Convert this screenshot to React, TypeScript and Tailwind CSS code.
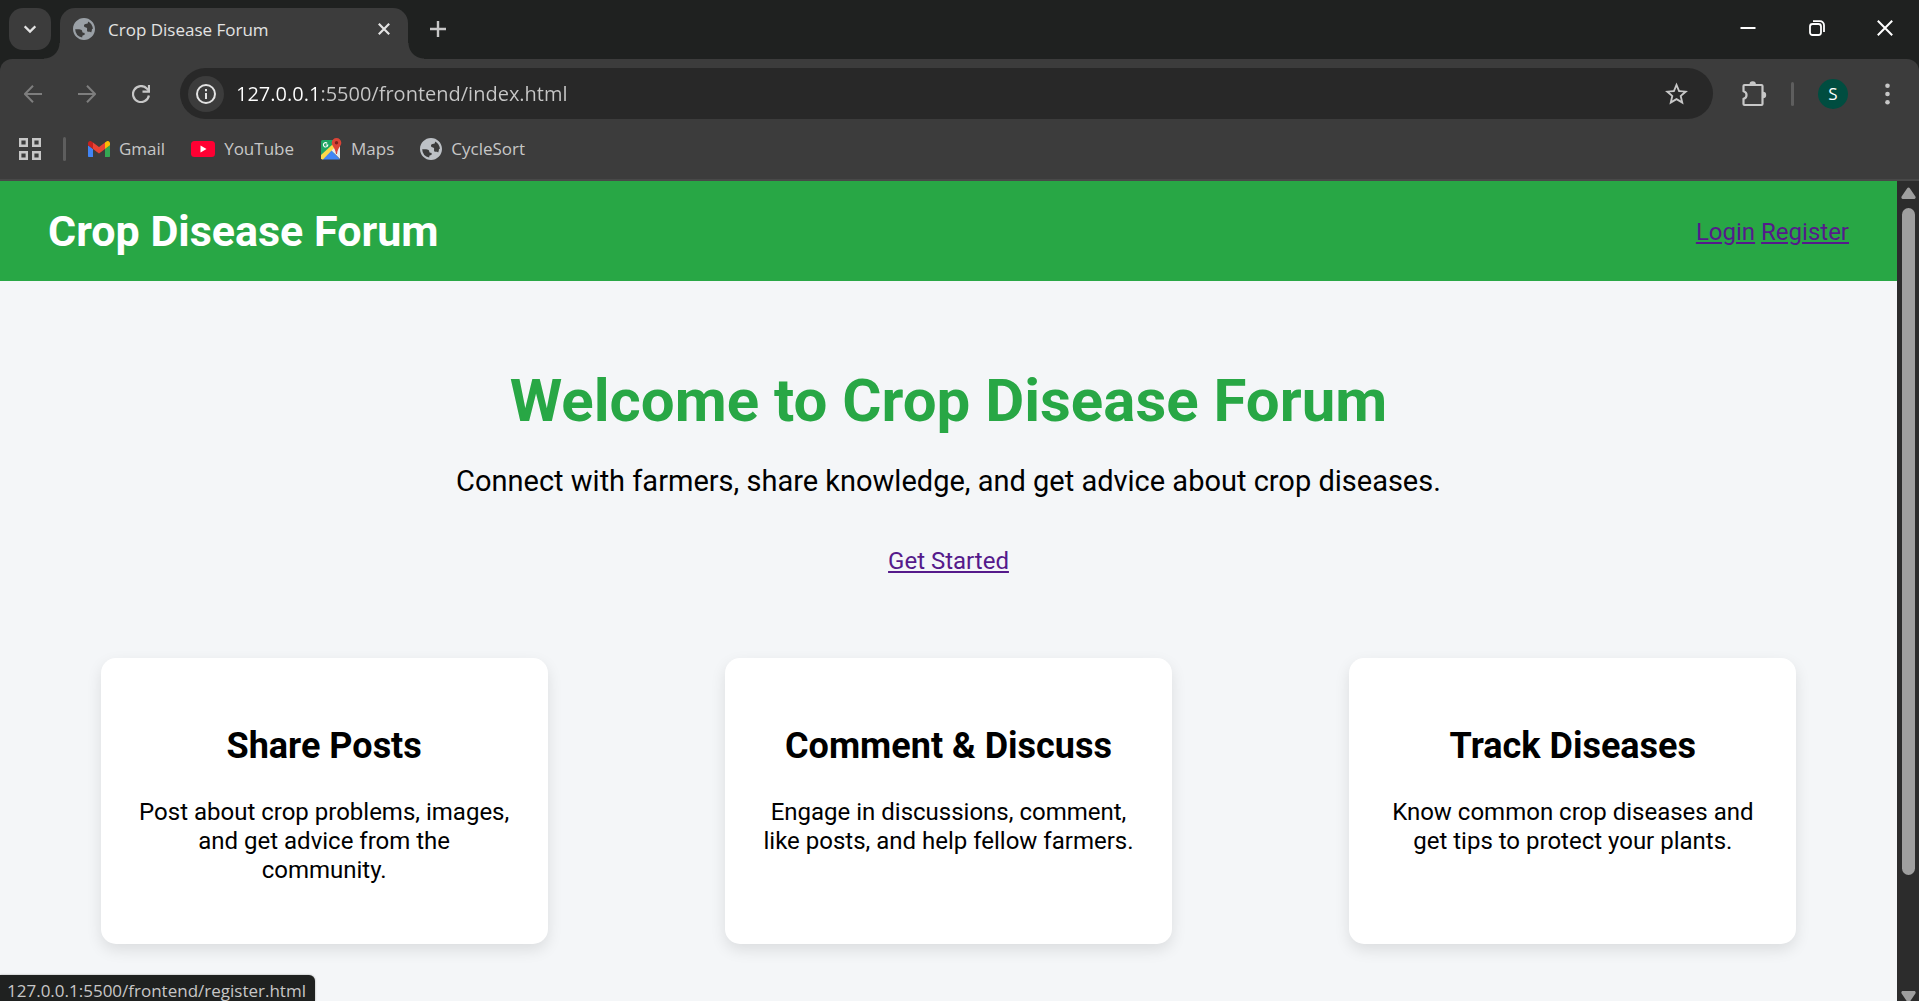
import { useState } from "react";
import type { ReactNode } from "react";

const cards = [
  { title: "Share Posts", text: "Post about crop problems, images, and get advice from the community." },
  { title: "Comment & Discuss", text: "Engage in discussions, comment, like posts, and help fellow farmers." },
  { title: "Track Diseases", text: "Know common crop diseases and get tips to protect your plants." },
];

function GlobeIcon({ className }: { className: string }) {
  return (
    <svg viewBox="0 0 16 16" className={`size-[22px] shrink-0 ${className}`} fill="currentColor" aria-hidden="true">
      <path d="M8 0C3.6 0 0 3.6 0 8s3.6 8 8 8 8-3.6 8-8-3.6-8-8-8zm5.8 8c0 .9-.2 1.8-.6 2.5-.6-.5-1.2-.5-1.7-.5-.9 0-1.3-.3-1.3-1 0-.9.3-1.5-.3-1.9-.5-.4-1.500-.3-1.800-1-.3-.8.2-1.6 1-1.7.9-.1 1.5-.1 1.7-.7.2-.5.1-.9.1-1.1A6.400 6.400 0 0 1 14.400 8zM1.600 8.200c.8 0 2.800 0 3.600.1.900.1 1.500.6 1.500 1.400 0 .7.3 1.100 1 1.100.7 0 .9.4.8 1-.1.5-.6.7-1.100.8-.6.2-.7.8-.7 1.600A6.400 6.400 0 0 1 1.600 8.200z" />
    </svg>
  );
}

function GmailIcon() {
  return (
    <svg viewBox="0 0 88 66" className="w-[22px] shrink-0" aria-hidden="true">
      <path fill="#4285f4" d="M6 66h14V32L0 17v43c0 3.300 2.700 6 6 6" />
      <path fill="#34a853" d="M68 66h14c3.300 0 6-2.700 6-6V17L68 32" />
      <path fill="#fbbc04" d="M68 6v26l20-15V9c0-7.400-8.500-11.700-14.400-7.200" />
      <path fill="#ea4335" d="M20 32V6l24 18L68 6v26L44 50" />
      <path fill="#c5221f" d="M0 9v8l20 15V6l-5.600-4.200C8.500-2.700 0 1.600 0 9" />
    </svg>
  );
}

function YouTubeIcon() {
  return (
    <svg viewBox="0 0 24 16" className="w-6 shrink-0" aria-hidden="true">
      <rect width="24" height="16" rx="3.5" fill="#ff0033" />
      <path d="M9.500 4.500v7l6-3.500z" fill="#fff" />
    </svg>
  );
}

function MapsIcon() {
  return (
    <svg viewBox="0 0 22 22" className="size-[22px] shrink-0" aria-hidden="true">
      <path d="M2.500 2H18v10L10 20H2.500A1.500 1.500 0 0 1 1 20V3.500A1.500 1.500 0 0 1 2.500 2z" fill="#1fa463" />
      <path d="M10.500 11.500 20 21.500H2z" fill="#4285f4" />
      <path d="M11 12 19 5l1 3v13z" fill="#e8eaed" />
      <path d="M1 17 13 6l2.500 2.500L3 21.500 1 21z" fill="#fdd94b" />
      <path d="M16.500 0a4.800 4.800 0 0 0-4.800 4.800c0 3.200 3.600 5 4.300 11.200h1c.7-6.200 4.300-8 4.300-11.200A4.800 4.800 0 0 0 16.500 0" fill="#db4437" />
      <circle cx="16.500" cy="4.800" r="1.700" fill="#7b231e" />
      <path d="M7.200 5.300A2.200 2.200 0 1 0 7.800 7H5.800" fill="none" stroke="#fff" strokeWidth="1.100" />
    </svg>
  );
}

function IconButton({ label, className, children }: { label: string; className: string; children: ReactNode }) {
  return (
    <button type="button" aria-label={label} className={`flex shrink-0 items-center justify-center ${className}`}>
      {children}
    </button>
  );
}

function TabStrip() {
  return (
    <div className="flex h-[59px] shrink-0 items-end bg-[#1f2120]">
      <IconButton label="Search tabs" className="mb-[9px] ml-[9px] size-[42px] rounded-[14px] bg-[#3c3c3c] text-[#e3e3e3]">
        <svg viewBox="0 0 12 12" className="size-3" fill="none" stroke="currentColor" strokeWidth="2.200" aria-hidden="true">
          <path d="M.7 3.300 6 8.600l5.300-5.300" />
        </svg>
      </IconButton>
      <div className="relative ml-[9px] flex h-[51px] w-[348px] items-center rounded-t-[15px] bg-[#3c3c3c] pb-[9px] pl-[13px] pr-3 before:absolute before:-left-4 before:bottom-0 before:size-4 before:bg-[radial-gradient(circle_at_0_0,transparent_15px,#3c3c3c_16px)] after:absolute after:-right-4 after:bottom-0 after:size-4 after:bg-[radial-gradient(circle_at_100%_0,transparent_15px,#3c3c3c_16px)]">
        <GlobeIcon className="text-[#9aa0a6]" />
        <span className="ml-[13px] mt-0.5 flex-1 whitespace-nowrap text-[17px] leading-6 text-[#e3e3e3]">Crop Disease Forum</span>
        <IconButton label="Close tab" className="size-6 text-[#e3e3e3]">
          <svg viewBox="0 0 12 12" className="size-3" fill="none" stroke="currentColor" strokeWidth="2.200" aria-hidden="true">
            <path d="m.8.8 10.400 10.400M11.200.8.800 11.200" />
          </svg>
        </IconButton>
      </div>
      <IconButton label="New tab" className="mb-[9px] ml-[9px] size-[42px] text-[#c7c7c7]">
        <svg viewBox="0 0 16 16" className="size-4" fill="none" stroke="currentColor" strokeWidth="2.400" aria-hidden="true">
          <path d="M8 0v16M0 8h16" />
        </svg>
      </IconButton>
      <div className="ml-auto flex h-full text-white">
        <IconButton label="Minimize" className="h-14 w-[69px]">
          <svg viewBox="0 0 16 16" className="size-4" stroke="currentColor" strokeWidth="2" aria-hidden="true">
            <path d="M.5 8h15" />
          </svg>
        </IconButton>
        <IconButton label="Restore" className="h-14 w-[69px]">
          <svg viewBox="0 0 16 16" className="size-4" fill="none" stroke="currentColor" strokeWidth="1.800" aria-hidden="true">
            <rect x="1" y="4" width="11" height="11" rx="2.500" />
            <path d="M4 1.200h7a4 4 0 0 1 4 4V12" />
          </svg>
        </IconButton>
        <IconButton label="Close" className="h-14 w-[68px]">
          <svg viewBox="0 0 16 16" className="size-4" fill="none" stroke="currentColor" strokeWidth="2" aria-hidden="true">
            <path d="m.8.8 14.400 14.400M15.200.8.800 15.200" />
          </svg>
        </IconButton>
      </div>
    </div>
  );
}

function Toolbar() {
  const [url, setUrl] = useState("127.0.0.1:5500/frontend/index.html");
  return (
    <div className="flex items-center py-[9px]">
      <IconButton label="Back" className="ml-[6px] h-12 w-[54px] text-[#7e7e7e]">
        <svg viewBox="0 0 18 18" className="size-[18px]" fill="none" stroke="currentColor" strokeWidth="2" aria-hidden="true">
          <path d="M18 9H1.500M9 .8.9 9 9 17.200" />
        </svg>
      </IconButton>
      <IconButton label="Forward" className="h-12 w-[54px] text-[#7e7e7e]">
        <svg viewBox="0 0 18 18" className="size-[18px]" fill="none" stroke="currentColor" strokeWidth="2" aria-hidden="true">
          <path d="M0 9h16.500M9 .8 17.100 9 9 17.200" />
        </svg>
      </IconButton>
      <IconButton label="Reload" className="h-12 w-[54px] text-[#c7c7c7]">
        <svg viewBox="0 0 18 18" className="size-[18px]" fill="none" stroke="currentColor" strokeWidth="2.200" aria-hidden="true">
          <path d="M16.900 10.500A8 8 0 1 1 14.800 3.500L16.500 5.300" />
          <path d="M17 0v6.700h-6.500" />
        </svg>
      </IconButton>
      <div className="ml-3 flex h-[51px] flex-1 items-center rounded-full bg-[#282828] pl-2 pr-4">
        <IconButton label="View site information" className="size-9 rounded-full bg-[#3c3c3c] text-[#e3e3e3]">
          <svg viewBox="0 0 20 20" className="size-5" fill="none" stroke="currentColor" strokeWidth="2" aria-hidden="true">
            <circle cx="10" cy="10" r="9" />
            <path d="M10 9v6M10 5v2.200" />
          </svg>
        </IconButton>
        <input
          aria-label="Address"
          value={url}
          onChange={(e) => setUrl(e.target.value)}
          className="ml-3 min-w-0 flex-1 bg-[linear-gradient(90deg,#ffffff_83px,#c7c7c7_84px)] bg-clip-text text-[20px] text-transparent outline-none"
        />
        <IconButton label="Bookmark this tab" className="size-[42px] text-[#c7c7c7]">
          <svg viewBox="2 2 20 19" className="size-[23px]" fill="currentColor" aria-hidden="true">
            <path d="m22 9.240-7.190-.62L12 2 9.190 8.630 2 9.240l5.460 4.730L5.820 21 12 17.270 18.180 21l-1.630-7.030zM12 15.400l-3.760 2.270 1-4.280-3.320-2.880 4.380-.38L12 6.100l1.710 4.040 4.380.38-3.320 2.880 1 4.280z" />
          </svg>
        </IconButton>
      </div>
      <IconButton label="Extensions" className="ml-5 size-[42px] text-[#c7c7c7]">
        <svg viewBox="0 0 26 26" className="size-[26px]" fill="none" stroke="currentColor" strokeWidth="2.200" strokeLinejoin="round" aria-hidden="true">
          <path d="M3.500 4h17a1 1 0 0 1 1 1v18a1 1 0 0 1-1 1h-17a1 1 0 0 1-1-1v-5.200a3.900 3.900 0 0 0 0-7.600V5a1 1 0 0 1 1-1z" />
          <path d="M8.500 3.500a3.200 3.200 0 0 1 6.400 0zM22 10.800a3.200 3.200 0 0 1 0 6.400z" fill="currentColor" stroke="none" />
        </svg>
      </IconButton>
      <div className="ml-4 h-6 w-[3px] rounded-full bg-[#5e5e5e]" />
      <IconButton label="Profile" className="ml-6 size-[30px] rounded-full bg-[#004d40] text-[17px] text-white">
        S
      </IconButton>
      <IconButton label="Menu" className="ml-[18px] mr-[11px] size-[42px] text-[#c7c7c7]">
        <svg viewBox="0 0 5 22" className="h-[22px]" fill="currentColor" aria-hidden="true">
          <circle cx="2.500" cy="2.700" r="2.300" />
          <circle cx="2.500" cy="11" r="2.300" />
          <circle cx="2.500" cy="19.300" r="2.300" />
        </svg>
      </IconButton>
    </div>
  );
}

function Bookmark({ icon, label }: { icon: ReactNode; label: string }) {
  return (
    <a href="#" className="flex items-center gap-[9px] text-[17px] leading-6 text-[#c7c7c7]">
      {icon}
      {label}
    </a>
  );
}

function BookmarksBar() {
  return (
    <nav aria-label="Bookmarks" className="flex h-[51px] items-center pb-[9px]">
      <IconButton label="Apps" className="ml-[19px] size-[22px] text-[#c7c7c7]">
        <svg viewBox="0 0 22 22" className="size-[22px]" fill="none" stroke="currentColor" strokeWidth="2.400" aria-hidden="true">
          <path d="M1.200 1.200h6.600v6.600H1.200zM14.200 1.200h6.600v6.600h-6.600zM1.200 14.200h6.600v6.600H1.200zM14.200 14.200h6.600v6.600h-6.600z" />
        </svg>
      </IconButton>
      <div className="mx-[22px] h-6 w-[3px] rounded-full bg-[#5e5e5e]" />
      <div className="flex gap-[26px]">
        <Bookmark icon={<GmailIcon />} label="Gmail" />
        <Bookmark icon={<YouTubeIcon />} label="YouTube" />
        <Bookmark icon={<MapsIcon />} label="Maps" />
        <Bookmark icon={<GlobeIcon className="text-[#bdc1c6]" />} label="CycleSort" />
      </div>
    </nav>
  );
}

function ForumPage() {
  return (
    <div className="min-w-0 flex-1 overflow-hidden bg-[#f4f6f8] font-['Roboto',sans-serif] text-2xl leading-[29px] text-black">
      <header className="flex items-center justify-between bg-[#28a745] px-12 py-6">
        <h1 className="text-[43px] font-bold leading-[52px] text-white">Crop Disease Forum</h1>
        <nav className="flex gap-1.5 pt-0.5 text-[#551a8b]">
          <a href="#login" className="underline">Login</a>
          <a href="#register" className="underline">Register</a>
        </nav>
      </header>
      <main>
        <section className="pb-[83px] pt-[85px] text-center">
          <h2 className="text-[60px] font-bold leading-[70px] text-[#28a745]">Welcome to Crop Disease Forum</h2>
          <p className="mt-7 text-[29px] leading-[34px]">Connect with farmers, share knowledge, and get advice about crop diseases.</p>
          <p className="mt-[49px] leading-7">
            <a href="#register" className="text-[#551a8b] underline">Get Started</a>
          </p>
        </section>
        <section className="flex justify-around px-3">
          {cards.map((card) => (
            <article key={card.title} className="w-[447px] rounded-[15px] bg-white px-9 pb-[59px] pt-[67px] text-center shadow-[0_6px_15px_rgba(0,0,0,0.1)]">
              <h3 className="text-4xl font-bold leading-[42px]">{card.title}</h3>
              <p className="mt-[31px]">{card.text}</p>
            </article>
          ))}
        </section>
      </main>
    </div>
  );
}

function Scrollbar() {
  return (
    <div aria-hidden="true" className="flex w-[22px] shrink-0 flex-col items-center bg-[#2c2c2c] pt-[6px] text-[#9f9f9f]">
      <svg viewBox="0 0 15 12" className="w-[15px]" fill="currentColor">
        <path d="M6.200 1.200 .6 9.600C0 10.700.5 12 1.800 12h11.400c1.300 0 1.800-1.300 1.200-2.400L8.800 1.200a1.500 1.500 0 0 0-2.600 0z" />
      </svg>
      <div className="mt-[9px] h-[82%] w-[13px] rounded-full bg-[#9f9f9f]" />
      <svg viewBox="0 0 15 12" className="-mb-0.5 mt-auto w-[15px] rotate-180" fill="currentColor">
        <path d="M6.200 1.200 .6 9.600C0 10.700.5 12 1.800 12h11.400c1.300 0 1.800-1.300 1.200-2.400L8.800 1.200a1.500 1.500 0 0 0-2.600 0z" />
      </svg>
    </div>
  );
}

export default function App() {
  return (
    <div className="relative flex h-screen flex-col overflow-hidden bg-[#1f2120] font-['Open_Sans','Noto_Sans',sans-serif]">
      <TabStrip />
      <div className="shrink-0 rounded-t-[12px] border-b-2 border-[#484848] bg-[#3c3c3c]">
        <Toolbar />
        <BookmarksBar />
      </div>
      <div className="flex min-h-0 flex-1">
        <ForumPage />
        <Scrollbar />
      </div>
      <div className="absolute bottom-0 left-0 h-[26px] rounded-tr-[6px] bg-[#1f2120] pl-[7px] pr-[9px] pt-1 text-[17px] leading-6 text-[#c7c7c7] shadow-[0_0_2px_rgba(0,0,0,0.4)]">
        127.0.0.1:5500/frontend/register.html
      </div>
    </div>
  );
}
